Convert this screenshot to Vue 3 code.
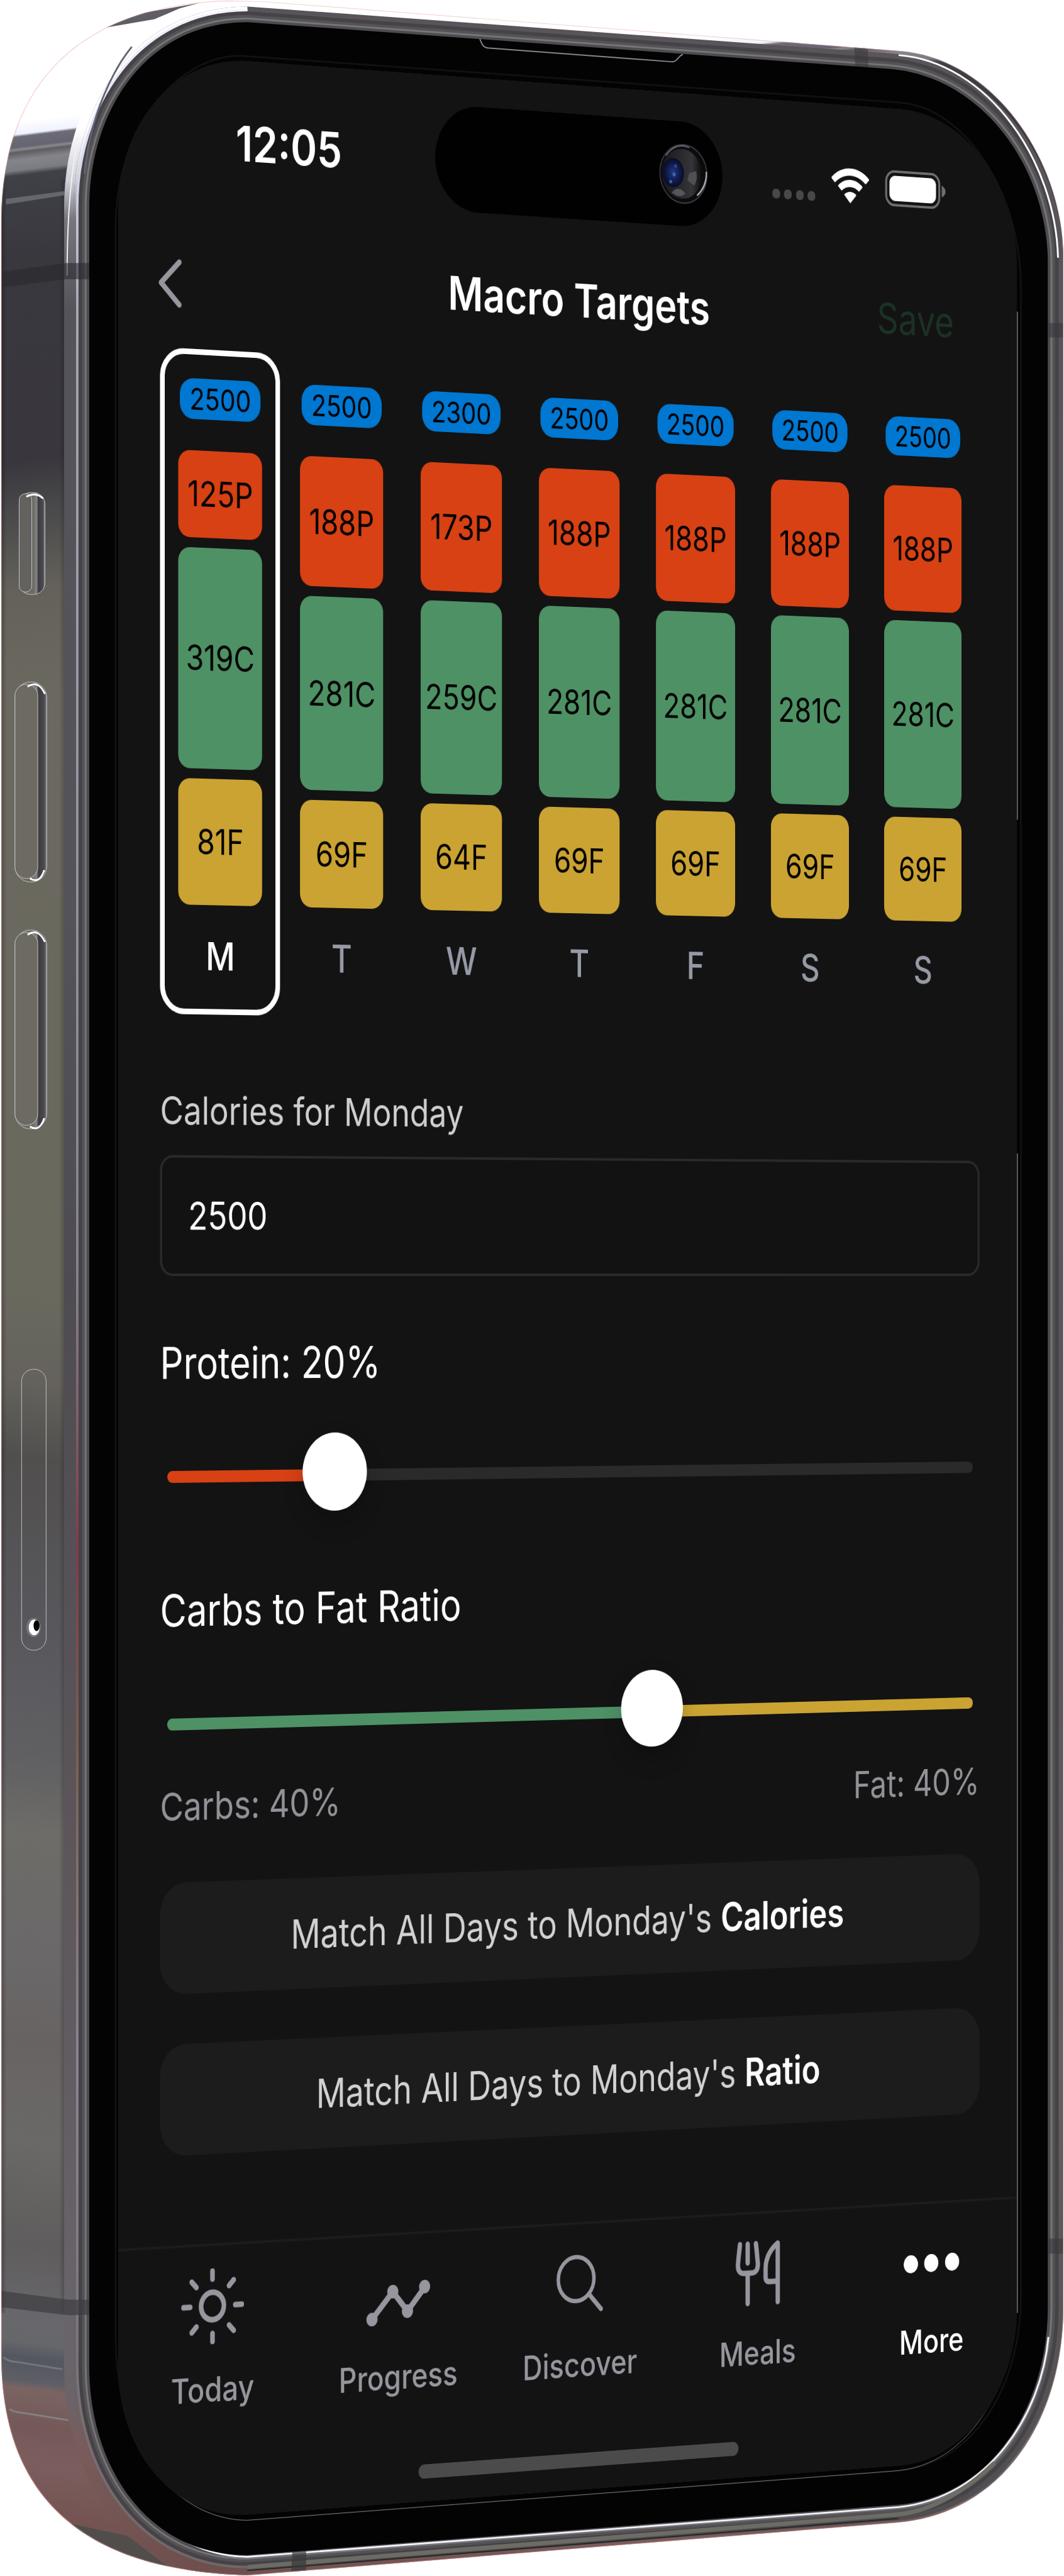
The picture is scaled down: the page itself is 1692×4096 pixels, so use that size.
<script setup>
import { ref, computed } from 'vue'

const days = [
  { id: 'mon', letter: 'M', kcal: 2500, p: 125, c: 319, f: 81 },
  { id: 'tue', letter: 'T', kcal: 2500, p: 188, c: 281, f: 69 },
  { id: 'wed', letter: 'W', kcal: 2300, p: 173, c: 259, f: 64 },
  { id: 'thu', letter: 'T', kcal: 2500, p: 188, c: 281, f: 69 },
  { id: 'fri', letter: 'F', kcal: 2500, p: 188, c: 281, f: 69 },
  { id: 'sat', letter: 'S', kcal: 2500, p: 188, c: 281, f: 69 },
  { id: 'sun', letter: 'S', kcal: 2500, p: 188, c: 281, f: 69 },
]
const selected = ref('mon')
const calories = ref('2500')
const protein = ref(20)
const ratio = ref(59)

const proteinFill = computed(() => ({ width: protein.value + '%' }))
const ratioFill = computed(() => ({ width: ratio.value + '%' }))

const tabs = [
  { id: 'today', label: 'Today' },
  { id: 'progress', label: 'Progress' },
  { id: 'discover', label: 'Discover' },
  { id: 'meals', label: 'Meals' },
  { id: 'more', label: 'More' },
]
const activeTab = ref('more')

const glass =
  'M149 3950V345C149 190 240 37 413 37L1484 115C1640 127 1749 280 1749 440V3850C1749 4010 1660 4165 1500 4180L413 4264C240 4264 149 4110 149 3950Z'
const shell =
  'M2 3930V370C3 140 130 12 373 1L436 2L1502 85C1660 97 1775 270 1775 430V3850C1775 4030 1680 4195 1496 4210L413 4298C130 4290 2 4160 2 3930Z'
const leftBevel = 'M413 4264C240 4264 149 4110 149 3950V345C149 190 240 37 413 37'
</script>

<template>
  <div class="stage">
    <svg class="chassis" viewBox="0 0 1776 4299" preserveAspectRatio="none" aria-hidden="true">
      <defs>
        <linearGradient id="side" x1="0" y1="0" x2="0" y2="4299" gradientUnits="userSpaceOnUse">
          <stop offset="0" stop-color="#fff" />
          <stop offset="0.048" stop-color="#fff" />
          <stop offset="0.053" stop-color="#f0f2ff" />
          <stop offset="0.054" stop-color="#6d6c76" />
          <stop offset="0.058" stop-color="#66656f" />
          <stop offset="0.059" stop-color="#89898f" />
          <stop offset="0.06" stop-color="#5e5d60" />
          <stop offset="0.063" stop-color="#84848b" />
          <stop offset="0.067" stop-color="#7b7b82" />
          <stop offset="0.069" stop-color="#3f4147" />
          <stop offset="0.1" stop-color="#39383e" />
          <stop offset="0.18" stop-color="#39373d" />
          <stop offset="0.2" stop-color="#4a494b" />
          <stop offset="0.23" stop-color="#636159" />
          <stop offset="0.27" stop-color="#6b695f" />
          <stop offset="0.5" stop-color="#6a695e" />
          <stop offset="0.535" stop-color="#64625b" />
          <stop offset="0.565" stop-color="#514f4e" />
          <stop offset="0.63" stop-color="#58575c" />
          <stop offset="0.68" stop-color="#605f62" />
          <stop offset="0.71" stop-color="#6d6c68" />
          <stop offset="0.76" stop-color="#6a6869" />
          <stop offset="0.79" stop-color="#686363" />
          <stop offset="0.83" stop-color="#6a6967" />
          <stop offset="0.87" stop-color="#5f5d5d" />
          <stop offset="0.9" stop-color="#68676c" />
          <stop offset="0.908" stop-color="#66676b" />
          <stop offset="0.914" stop-color="#555760" />
          <stop offset="0.923" stop-color="#5d5e66" />
          <stop offset="0.926" stop-color="#7a6462" />
          <stop offset="0.94" stop-color="#745958" />
          <stop offset="0.955" stop-color="#7c5d5e" />
          <stop offset="0.975" stop-color="#735452" />
          <stop offset="1" stop-color="#6c504f" />
        </linearGradient>
        <linearGradient id="rim" x1="0" y1="0" x2="0" y2="4299" gradientUnits="userSpaceOnUse">
          <stop offset="0" stop-color="#59545a" />
          <stop offset="0.03" stop-color="#59555a" />
          <stop offset="0.15" stop-color="#55545b" />
          <stop offset="0.35" stop-color="#5a5960" />
          <stop offset="0.6" stop-color="#56535b" />
          <stop offset="0.8" stop-color="#645f61" />
          <stop offset="1" stop-color="#4c4b4e" />
        </linearGradient>
        <linearGradient id="bevel" x1="0" y1="0" x2="0" y2="4299" gradientUnits="userSpaceOnUse">
          <stop offset="0" stop-color="#fff" />
          <stop offset="0.05" stop-color="#fff" />
          <stop offset="0.07" stop-color="#cfcfd8" />
          <stop offset="0.085" stop-color="#77777d" />
          <stop offset="0.12" stop-color="#55545a" />
          <stop offset="0.35" stop-color="#54535a" />
          <stop offset="0.5" stop-color="#4e4c52" />
          <stop offset="0.7" stop-color="#5b5559" />
          <stop offset="0.9" stop-color="#68646a" />
          <stop offset="0.93" stop-color="#6a6468" />
          <stop offset="0.95" stop-color="#7a5c5c" />
          <stop offset="1" stop-color="#6e4f4d" />
        </linearGradient>
        <linearGradient id="glint" x1="0" y1="0" x2="0" y2="4299" gradientUnits="userSpaceOnUse">
          <stop offset="0" stop-color="#f4f4ff" />
          <stop offset="0.06" stop-color="#dcdcf2" />
          <stop offset="0.12" stop-color="#a9a8b6" />
          <stop offset="0.5" stop-color="#85838d" />
          <stop offset="0.6" stop-color="#823b48" />
          <stop offset="0.68" stop-color="#7c6152" />
          <stop offset="0.8" stop-color="#8b8795" />
          <stop offset="1" stop-color="#6f6768" />
        </linearGradient>
        <linearGradient id="edgeShade" x1="0" x2="1">
          <stop offset="0" stop-color="#000" stop-opacity="0.3" />
          <stop offset="0.1" stop-color="#000" stop-opacity="0" />
          <stop offset="0.9" stop-color="#000" stop-opacity="0" />
          <stop offset="1" stop-color="#1c1c26" stop-opacity="0.3" />
        </linearGradient>
        <linearGradient id="key" x1="0" x2="1">
          <stop offset="0" stop-color="#6c6a60" />
          <stop offset="0.55" stop-color="#6c6a60" />
          <stop offset="0.68" stop-color="#85848a" />
          <stop offset="0.74" stop-color="#3c3c3e" />
          <stop offset="0.92" stop-color="#4a494f" />
          <stop offset="1" stop-color="#85848c" />
        </linearGradient>
        <clipPath id="body"><path :d="shell" /></clipPath>
        <clipPath id="upper"><rect width="1776" height="1800" /></clipPath>
        <clipPath id="lower"><rect y="1800" width="1776" height="2499" /></clipPath>
      </defs>
      <g clip-path="url(#body)">
        <g clip-path="url(#upper)">
          <rect width="1776" height="4299" fill="url(#side)" transform="skewY(-7)" />
        </g>
        <g clip-path="url(#lower)">
          <rect y="-300" width="1776" height="4599" fill="url(#side)" transform="skewY(7)" />
        </g>
        <rect y="300" width="110" height="3560" fill="url(#edgeShade)" />
        <path d="M10 332L107 319V326L10 341Z" fill="#67656f" />
        <path d="M100 4208L213 4232L300 4299H160Z" fill="#504d4b" />
        <path d="M6 3934Q12 3941 30 3942L104 3954" fill="none" stroke="#74767c" stroke-width="3" />
        <path d="M16 4020Q20 4025 40 4027L114 4039" fill="none" stroke="#858082" stroke-width="3" />
        <path class="line" :d="leftBevel" stroke="url(#bevel)" stroke-width="84" />
        <path class="line" :d="glass" stroke="url(#rim)" stroke-width="52" />
        <path class="line" :d="leftBevel" stroke="url(#bevel)" stroke-width="52" />
        <path class="line" :d="leftBevel" stroke="url(#glint)" stroke-width="44" />
        <path class="line" :d="glass" stroke="#464347" stroke-width="36" />
        <path class="line" :d="glass" stroke="#565356" stroke-width="24" />
        <path class="line" :d="glass" stroke="#76757a" stroke-width="15" />
        <path class="line" :d="glass" stroke="#4e4c4e" stroke-width="9" />
        <path d="M150 54C180 38 200 28 230 23L333 5L300 14L258 32L165 48Z" fill="#5e5e64" />
        <path class="line" d="M141 290C146 240 160 180 190 124C200 104 212 88 220 78" stroke="#5f6672" stroke-width="3" />
        <path class="line" d="M112 460C112 380 116 300 130 230" stroke="#f1f1f6" stroke-width="2" />
        <path class="line" d="M1500 92C1650 104 1762 270 1766 430" stroke="#fff" stroke-width="3" />
        <path class="line" d="M1750 3900C1738 4030 1650 4168 1500 4184L413 4267C330 4267 270 4220 235 4180" stroke="#f2f2f8" stroke-width="3" />
        <path class="line" d="M413 4284L1500 4196C1560 4190 1620 4150 1660 4110" stroke="#6d6c64" stroke-width="7" />
        <path class="line" d="M413 4290L1500 4203" stroke="#262527" stroke-width="2" />
        <path d="M0 454L110 439H149V466L110 466L0 480Z" fill="#2a292d" opacity="0.6" />
        <path d="M0 3823L115 3838H149V3863L115 3864L0 3850Z" fill="#3d3c40" opacity="0.7" />
        <path d="M1426 78H1448L1450 114H1428Z" fill="#38363b" opacity="0.55" />
        <path d="M488 4256H511V4292L486 4298Z" fill="#39373b" opacity="0.7" />
        <path d="M1750 539H1776V563H1750ZM1750 3736H1776V3761H1750Z" fill="#38373a" opacity="0.6" />
        <path class="line" :d="shell" stroke="#e79c9c" stroke-width="2" opacity="0.5" />
      </g>

      <path fill="#030303" :d="glass" />
      <path class="line" d="M801 65C804 73 806 79 814 80L1120 103C1132 104 1132 92 1140 91" stroke="#85848c" stroke-width="2" />
      <path class="line" stroke="#111" stroke-width="3" d="M193 3900V380C193 210 300 93 400 93L1500 171C1610 178 1704 320 1704 480V3830C1704 3990 1620 4118 1490 4124L413 4206C290 4206 193 4080 193 3900Z" />
      <path class="line" stroke="#77757e" stroke-width="1" d="M1697 3850C1690 3980 1620 4116 1490 4124L413 4206C350 4206 290 4170 250 4110" />
      <path class="line" stroke="#6a6a70" stroke-width="2" d="M1698 520V1368M1698 1925V3860" />

      <g stroke="#c6c5cc" stroke-width="1">
        <rect x="32" y="822" width="43" height="170" rx="19" fill="url(#key)" />
        <rect x="32" y="824" width="21" height="164" rx="10" fill="#63625e" />
        <rect x="25" y="1138" width="53" height="334" rx="26" fill="url(#key)" />
        <rect x="25" y="1142" width="38" height="324" rx="19" fill="#6c6a61" />
        <rect x="25" y="1552" width="53" height="332" rx="26" fill="url(#key)" />
        <rect x="25" y="1556" width="38" height="322" rx="19" fill="#6c6a61" />
        <rect x="36" y="2285" width="41" height="469" rx="20" fill="none" />
      </g>
      <path class="line" stroke="#fff" stroke-width="3" d="M44 829Q60 820 72 832M46 1146Q64 1134 75 1158M46 1560Q64 1548 75 1572M50 1466Q66 1476 74 1452M50 1880Q66 1890 74 1866" />
      <ellipse cx="56" cy="2716" rx="12" ry="16" fill="#77767c" />
      <ellipse cx="57" cy="2716" rx="9" ry="13" fill="#fff" />
      <ellipse cx="61" cy="2713" rx="5" ry="9" fill="#050505" />
    </svg>

    <div class="screen">
      <header class="status">
        <time class="clock">12:05</time>
        <div class="island">
          <svg class="camera" viewBox="0 0 100 100" aria-hidden="true">
            <defs>
              <radialGradient id="lens" cx="0.5" cy="0.5" r="0.6">
                <stop offset="0" stop-color="#203c80" />
                <stop offset="0.5" stop-color="#111a4c" />
                <stop offset="1" stop-color="#05060f" />
              </radialGradient>
              <linearGradient id="barrel" x1="0" x2="1">
                <stop offset="0" stop-color="#17171a" />
                <stop offset="0.75" stop-color="#353539" />
                <stop offset="1" stop-color="#0c0c0e" />
              </linearGradient>
            </defs>
            <circle cx="50" cy="50" r="48" fill="#0b0b0c" stroke="#3d3d44" stroke-width="2" />
            <circle cx="47" cy="50" r="41" fill="url(#barrel)" />
            <path d="M26 82Q40 68 54 82Q44 92 26 82Z" fill="#57575b" />
            <path d="M62 48L76 44Q80 58 72 68L58 60Z" fill="#505054" />
            <path d="M78 84Q98 68 97 44" fill="none" stroke="#a9abb5" stroke-width="3" />
            <path d="M14 22Q34 -2 62 6" fill="none" stroke="#6f6f77" stroke-width="2" />
            <ellipse cx="29" cy="49" rx="22" ry="24" fill="url(#lens)" />
            <circle cx="31" cy="52" r="3" fill="#3d6cbd" />
            <circle cx="24" cy="64" r="3" fill="#2f66a4" />
            <circle cx="34" cy="38" r="3" fill="#33409c" />
          </svg>
        </div>
        <div class="indicators">
          <svg width="89" height="24" viewBox="0 0 89 24" fill="#48484a" aria-hidden="true">
            <rect y="8" width="16" height="16" rx="7" />
            <rect x="24" y="8" width="16" height="16" rx="7" />
            <rect x="49" y="8" width="16" height="16" rx="7" />
            <rect x="73" y="8" width="16" height="16" rx="7" />
          </svg>
          <svg width="78" height="58" viewBox="0 0 78 58" fill="#fff" aria-hidden="true">
            <path d="M39 0C54 0 68 6 78 16Q79 17 78 18L72 24Q71 25 70 24C61 16 50 12 39 12S17 16 8 24Q7 25 6 24L0 18Q-1 17 0 16C10 6 24 0 39 0Z" />
            <path d="M39 19C49 19 58 23 64 29Q65 30 64 31L58 37Q57 38 56 37C51 33 46 31 39 31S27 33 22 37Q21 38 20 37L14 31Q13 30 14 29C20 23 29 19 39 19Z" />
            <path d="M39 39C44 39 48 41 51 43Q52 44 51 45L40 57Q39 58 38 57L27 45Q26 44 27 43C30 41 34 39 39 39Z" />
          </svg>
          <svg width="127" height="60" viewBox="0 0 127 60" aria-hidden="true">
            <rect x="2" y="2" width="112" height="56" rx="17" fill="none" stroke="#6f6f71" stroke-width="4" />
            <rect x="9" y="9" width="98" height="42" rx="12" fill="#fff" />
            <path d="M119 20Q127 24 127 30T119 40Z" fill="#6f6f71" />
          </svg>
        </div>
      </header>

      <nav class="nav">
        <button class="back" type="button" aria-label="Back">
          <svg width="48" height="80" viewBox="0 0 48 80" fill="none" stroke="#97969e" stroke-width="9" stroke-linecap="round" stroke-linejoin="round">
            <path d="M41 6L6 40L41 74" />
          </svg>
        </button>
        <h1 class="title">Macro Targets</h1>
        <button class="save" type="button">Save</button>
      </nav>

      <main class="content">
        <div class="week">
          <button
            v-for="d in days"
            :key="d.id"
            type="button"
            class="day"
            :class="{ selected: d.id === selected }"
            @click="selected = d.id"
          >
            <span class="chip">{{ d.kcal }}</span>
            <span class="stack">
              <span class="block protein" :style="{ flexGrow: d.p * 4 }">{{ d.p }}P</span>
              <span class="block carbs" :style="{ flexGrow: d.c * 4 }">{{ d.c }}C</span>
              <span class="block fat" :style="{ flexGrow: d.f * 9 }">{{ d.f }}F</span>
            </span>
            <span class="letter">{{ d.letter }}</span>
          </button>
        </div>

        <label class="field-label" for="calories">Calories for Monday</label>
        <input id="calories" v-model="calories" class="field" type="text" inputmode="numeric" />

        <label class="slider-label" for="protein">Protein: {{ protein }}%</label>
        <div class="slider plain">
          <div class="fill red" :style="proteinFill"></div>
          <input id="protein" v-model="protein" type="range" min="0" max="100" />
        </div>

        <label class="slider-label second" for="ratio">Carbs to Fat Ratio</label>
        <div class="slider gold">
          <div class="fill green" :style="ratioFill"></div>
          <input id="ratio" v-model="ratio" type="range" min="0" max="100" />
        </div>
        <div class="legend"><span>Carbs: 40%</span><span>Fat: 40%</span></div>

        <div class="actions">
          <button type="button" class="match">Match All Days to Monday's <strong>Calories</strong></button>
          <button type="button" class="match">Match All Days to Monday's <strong>Ratio</strong></button>
        </div>
      </main>

      <footer class="tabbar">
        <button
          v-for="t in tabs"
          :key="t.id"
          type="button"
          class="tab"
          :class="{ active: t.id === activeTab }"
          @click="activeTab = t.id"
        >
          <svg v-if="t.id === 'today'" width="121" height="121" viewBox="0 0 121 121" fill="none" stroke="currentColor" stroke-width="9" stroke-linecap="round" aria-hidden="true">
            <circle cx="60" cy="60" r="22" />
            <path d="M60 4V17M60 104V117M4 60H17M104 60H117M20 20L29 29M92 92L101 101M101 20L92 29M29 92L20 101" />
          </svg>
          <svg v-else-if="t.id === 'progress'" width="128" height="121" viewBox="0 0 128 121" fill="currentColor" aria-hidden="true">
            <path d="M12 98L53 55L82 88L117 50" fill="none" stroke="currentColor" stroke-width="10" stroke-linejoin="round" />
            <circle cx="12" cy="98" r="11" />
            <circle cx="53" cy="55" r="11" />
            <circle cx="82" cy="88" r="11" />
            <circle cx="116" cy="50" r="11" />
          </svg>
          <svg v-else-if="t.id === 'discover'" width="95" height="121" viewBox="0 0 95 121" fill="none" stroke="currentColor" stroke-linecap="round" aria-hidden="true">
            <circle cx="40" cy="53" r="36" stroke-width="7" />
            <path d="M66 79L90 104" stroke-width="8" />
          </svg>
          <svg v-else-if="t.id === 'meals'" width="92" height="121" viewBox="0 0 92 121" fill="none" stroke="currentColor" stroke-width="9" stroke-linecap="round" stroke-linejoin="round" aria-hidden="true">
            <path d="M9 13L5 45Q4 61 18 61H33Q47 61 46 45L42 13M25 13V44M25 61V111" />
            <path d="M87 111V14Q62 30 62 56V69Q62 77 70 77H87" />
          </svg>
          <svg v-else width="117" height="121" viewBox="0 0 117 121" fill="currentColor" aria-hidden="true">
            <circle cx="15" cy="63" r="15" />
            <circle cx="58" cy="63" r="15" />
            <circle cx="102" cy="63" r="15" />
          </svg>
          <span>{{ t.label }}</span>
        </button>
      </footer>
      <div class="home"></div>
    </div>
  </div>
</template>

<style>
body {
  margin: 0;
  background: #fff;
}
</style>

<style scoped>
.stage {
  position: relative;
  box-sizing: border-box;
  width: 100%;
  padding: 82px 0;
  overflow: hidden;
  font-family: Inter, "Liberation Sans", sans-serif;
}

.chassis {
  position: absolute;
  inset: 0;
  width: 100%;
  height: 100%;
}

.line {
  fill: none;
}

/* The display is a flat page turned away from the viewer at its right side. */
.screen {
  position: relative;
  box-sizing: border-box;
  width: 107.2%;
  margin-left: 11.1%;
  padding: 47px 0 37px;
  border-radius: 250px;
  background: #131313;
  color: #fff;
  transform-origin: 0 1945px;
  transform: perspective(17590px) rotateY(33.6deg);
}

button {
  margin: 0;
  padding: 0;
  border: 0;
  background: none;
  color: inherit;
  font: inherit;
  cursor: pointer;
}

.status {
  display: grid;
  grid-template-columns: 1fr 580px 1fr;
  align-items: center;
  height: 172px;
}

.clock {
  padding-left: 226px;
  font-size: 78px;
  font-weight: 600;
  line-height: 92px;
}

.island {
  display: flex;
  align-items: center;
  justify-content: flex-end;
  box-sizing: border-box;
  height: 172px;
  padding-right: 30px;
  border-radius: 86px;
  background: #010101;
}

.camera {
  width: 100px;
  height: 100px;
}

.indicators {
  display: flex;
  align-items: flex-end;
  gap: 34px;
  padding-left: 103px;
}

.indicators svg,
.back svg {
  display: block;
}

.nav {
  display: grid;
  grid-template-columns: 1fr auto 1fr;
  align-items: center;
  box-sizing: border-box;
  height: 247px;
  padding: 16px 134px 0 76px;
}

.back {
  justify-self: start;
  padding-top: 24px;
}

.title {
  margin: 0;
  padding-left: 58px;
  font-size: 76px;
  font-weight: 600;
  line-height: 92px;
}

.save {
  justify-self: end;
  color: #1b3224;
  font-size: 70px;
  line-height: 92px;
}

.content {
  padding: 0 80px;
}

.week {
  display: grid;
  grid-template-columns: repeat(7, 1fr);
  gap: 4px;
  padding-right: 3px;
}

.day {
  display: flex;
  flex-direction: column;
  padding: 38px 26px 48px;
  border: 9px solid transparent;
  border-radius: 46px;
  color: #9699a6;
}

.day.selected {
  border-color: #fff;
  color: #fff;
}

.chip {
  height: 65px;
  margin: 0 3px 50px;
  border-radius: 26px;
  background: #0077d0;
  color: #000;
  font-size: 48px;
  line-height: 65px;
  text-align: center;
}

.stack {
  display: flex;
  flex-direction: column;
  gap: 16px;
  height: 726px;
}

.block {
  display: flex;
  align-items: center;
  justify-content: center;
  flex: 1 1 0;
  border-radius: 22px;
  color: #000;
  font-size: 56px;
}

.protein {
  background: #d74114;
}

.carbs {
  background: #4e9165;
}

.fat {
  background: #cba332;
}

.letter {
  margin-top: 46px;
  font-size: 62px;
  font-weight: 500;
  line-height: 72px;
  text-align: center;
}

.field-label {
  display: block;
  margin-top: 118px;
  color: #cfcfcf;
  font-size: 62px;
  line-height: 72px;
}

.field {
  display: block;
  box-sizing: border-box;
  width: 100%;
  height: 193px;
  margin-top: 35px;
  padding: 0 50px;
  border: 4px solid #2a2a2a;
  border-radius: 24px;
  outline: none;
  background: #121212;
  color: #fff;
  font-family: inherit;
  font-size: 62px;
}

.slider-label {
  display: block;
  margin-top: 99px;
  font-size: 70px;
  line-height: 80px;
}

.slider-label.second {
  margin-top: 111px;
}

.slider {
  position: relative;
  display: flex;
  align-items: center;
  height: 126px;
  margin: 78px 14px 0;
}

.slider::before {
  content: "";
  flex: 1;
  height: 19px;
  border-radius: 10px;
}

.slider.plain::before {
  background: #2a2a2a;
}

.slider.gold::before {
  background: #cba332;
}

.fill {
  position: absolute;
  left: 0;
  height: 19px;
  border-radius: 10px 0 0 10px;
}

.fill.red {
  background: #d74114;
}

.fill.green {
  background: #4e9165;
}

/* The input overhangs the track by half a thumb on each side. */
.slider input {
  position: absolute;
  top: -5px;
  left: -63px;
  width: calc(100% + 126px);
  height: 126px;
  margin: 0;
  background: none;
  appearance: none;
}

.slider input::-webkit-slider-thumb {
  width: 126px;
  height: 126px;
  border-radius: 50%;
  background: #fff;
  box-shadow: 0 18px 40px rgba(0, 0, 0, 0.2);
  appearance: none;
}

.legend {
  display: flex;
  justify-content: space-between;
  margin-top: 31px;
  color: #939299;
  font-size: 62px;
  line-height: 76px;
}

.actions {
  display: flex;
  flex-direction: column;
  gap: 80px;
  margin-top: 83px;
}

.match {
  height: 178px;
  padding-right: 32px;
  border-radius: 50px;
  background: #1c1c1c;
  color: #d2d2d2;
  font-size: 64px;
}

.match strong {
  color: #fff;
  font-weight: 600;
}

.tabbar {
  display: flex;
  margin-top: 143px;
  padding-top: 36px;
  border-top: 4px solid #1c1c1c;
}

.tab {
  display: flex;
  flex: 1;
  flex-direction: column;
  align-items: center;
  gap: 39px;
  color: #97969e;
  font-size: 55px;
  font-weight: 500;
  line-height: 66px;
}

.tab.active {
  color: #fff;
}

.home {
  width: 646px;
  height: 23px;
  margin: 112px auto 0;
  border-radius: 12px;
  background: #4b4b4b;
}
</style>
